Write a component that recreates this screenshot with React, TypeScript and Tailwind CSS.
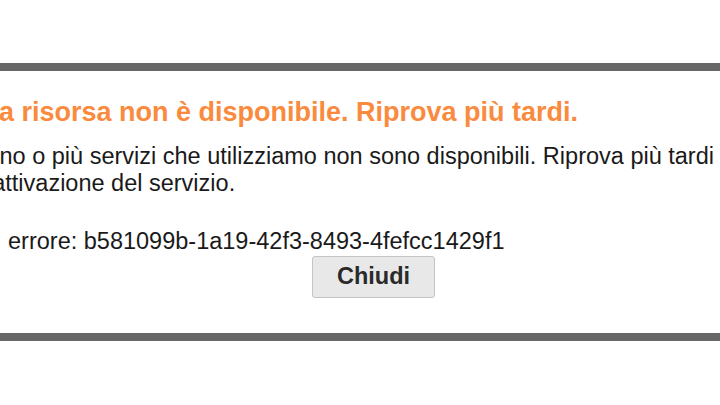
import React from "react";

export default function App() {
  return (
    <div className="w-[720px] h-[405px] overflow-hidden bg-white font-['Liberation_Sans',Arial,sans-serif]">
      <div className="pt-[63px]">
        <div className="ml-[-30px] w-[807px] border-t-[8px] border-b-[8px] border-[#676767] px-[12.5px] pt-[26px] pb-[35px]">
          <h1 className="whitespace-nowrap text-[27px] leading-[31px] font-bold text-[#fa8a3e]">
            La risorsa non è disponibile. Riprova più tardi.
          </h1>
          <p className="mt-[15.4px] whitespace-nowrap text-[23.5px] leading-[26.5px] text-[#1a1a1a]">
            Uno o più servizi che utilizziamo non sono disponibili. Riprova più tardi oppure contatta l'amministratore per
            <br />
            l'attivazione del servizio.
          </p>
          <p className="mt-[32px] ml-[-7.5px] whitespace-nowrap text-[23.5px] leading-[26.5px] text-[#1a1a1a]">
            <span className="mr-[3px]">ID</span> errore: b581099b-1a19-42f3-8493-4fefcc1429f1
          </p>
          <div className="mt-[1px] flex justify-center">
            <button className="w-[123px] h-[42px] rounded-[3px] border border-[#c4c4c4] bg-[#e8e8e8] text-[23.5px] font-bold text-[#2a2a2a]">
              Chiudi
            </button>
          </div>
        </div>
      </div>
    </div>
  );
}
